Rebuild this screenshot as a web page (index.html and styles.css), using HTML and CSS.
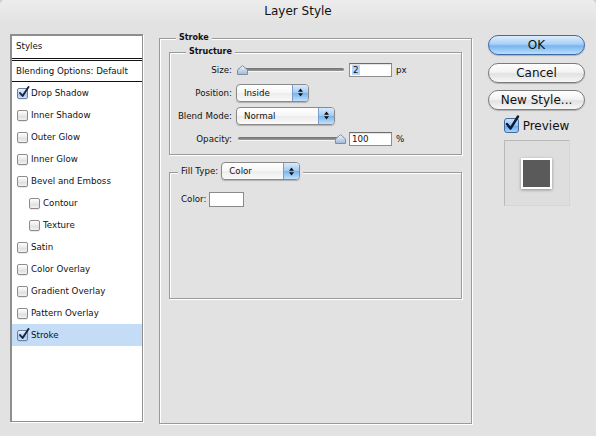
FILE: index.html
```html
<!DOCTYPE html>
<html>
<head>
<meta charset="utf-8">
<title>Layer Style</title>
<link rel="stylesheet" href="styles.css">
</head>
<body>
<div class="window">
  <div class="titlebar">Layer Style</div>
  <div class="content">
    <div class="list">
      <div class="row head">Styles</div>
      <div class="row blend">Blending Options: Default</div>
      <div class="row item"><span class="cb checked"><svg class="check" width="12" height="13" viewBox="0 0 12 13"><path d="M2 7 L4.6 10 L10.5 1" fill="none" stroke="#16223f" stroke-width="1.9" stroke-linecap="round" stroke-linejoin="round"/></svg></span>Drop Shadow</div>
      <div class="row item"><span class="cb"></span>Inner Shadow</div>
      <div class="row item"><span class="cb"></span>Outer Glow</div>
      <div class="row item"><span class="cb"></span>Inner Glow</div>
      <div class="row item"><span class="cb"></span>Bevel and Emboss</div>
      <div class="row item sub"><span class="cb"></span>Contour</div>
      <div class="row item sub"><span class="cb"></span>Texture</div>
      <div class="row item"><span class="cb"></span>Satin</div>
      <div class="row item"><span class="cb"></span>Color Overlay</div>
      <div class="row item"><span class="cb"></span>Gradient Overlay</div>
      <div class="row item"><span class="cb"></span>Pattern Overlay</div>
      <div class="row item selected"><span class="cb checked"><svg class="check" width="12" height="13" viewBox="0 0 12 13"><path d="M2 7 L4.6 10 L10.5 1" fill="none" stroke="#16223f" stroke-width="1.9" stroke-linecap="round" stroke-linejoin="round"/></svg></span>Stroke</div>
    </div>

    <div class="panel">
      <div class="legend bold">Stroke</div>
      <div class="group structure">
        <div class="legend bold">Structure</div>
        <div class="frow">
          <span class="lbl">Size:</span>
          <div class="slider">
            <div class="track"></div>
            <svg class="thumb thumb-min" width="11" height="10" viewBox="0 0 11 10"><defs><linearGradient id="tg1" x1="0" y1="0" x2="0" y2="1"><stop offset="0" stop-color="#f4f7fb"/><stop offset="0.5" stop-color="#c9d6e8"/><stop offset="1" stop-color="#9fb8da"/></linearGradient></defs><path d="M0.5 9.5 L0.5 5 L5.5 0.6 L10.5 5 L10.5 9.5 Z" fill="url(#tg1)" stroke="#7f8da3" stroke-width="1" stroke-linejoin="round"/></svg>
          </div>
          <span class="field"><span class="selection">2</span></span>
          <span class="unit">px</span>
        </div>
        <div class="frow">
          <span class="lbl">Position:</span>
          <div class="popup w-pos"><span class="ptext">Inside</span><span class="parrows"><svg width="5" height="9" viewBox="0 0 5 9"><path d="M0 3.8 L2.5 0.5 L5 3.8 Z M0 5.2 L2.5 8.5 L5 5.2 Z" fill="#111"/></svg></span></div>
        </div>
        <div class="frow">
          <span class="lbl">Blend Mode:</span>
          <div class="popup w-blend"><span class="ptext">Normal</span><span class="parrows"><svg width="5" height="9" viewBox="0 0 5 9"><path d="M0 3.8 L2.5 0.5 L5 3.8 Z M0 5.2 L2.5 8.5 L5 5.2 Z" fill="#111"/></svg></span></div>
        </div>
        <div class="frow">
          <span class="lbl">Opacity:</span>
          <div class="slider">
            <div class="track"></div>
            <svg class="thumb thumb-max" width="11" height="10" viewBox="0 0 11 10"><defs><linearGradient id="tg2" x1="0" y1="0" x2="0" y2="1"><stop offset="0" stop-color="#f4f7fb"/><stop offset="0.5" stop-color="#c9d6e8"/><stop offset="1" stop-color="#9fb8da"/></linearGradient></defs><path d="M0.5 9.5 L0.5 5 L5.5 0.6 L10.5 5 L10.5 9.5 Z" fill="url(#tg2)" stroke="#7f8da3" stroke-width="1" stroke-linejoin="round"/></svg>
          </div>
          <span class="field">100</span>
          <span class="unit">%</span>
        </div>
      </div>

      <div class="group fill">
        <div class="legend fill-legend">
          <span>Fill Type:</span>
          <div class="popup w-fill"><span class="ptext">Color</span><span class="parrows"><svg width="5" height="9" viewBox="0 0 5 9"><path d="M0 3.8 L2.5 0.5 L5 3.8 Z M0 5.2 L2.5 8.5 L5 5.2 Z" fill="#111"/></svg></span></div>
        </div>
        <div class="color-row"><span class="color-lbl">Color:</span><span class="swatch"></span></div>
      </div>
    </div>

    <div class="side">
      <div class="btn default">OK</div>
      <div class="btn">Cancel</div>
      <div class="btn">New Style...</div>
      <div class="preview-check"><span class="cb-lg"><svg width="16" height="17" viewBox="0 0 16 17"><path d="M3 9 L6.5 13.5 L14 1.5" fill="none" stroke="#0e1a33" stroke-width="2.4" stroke-linecap="round" stroke-linejoin="round"/></svg></span>Preview</div>
      <div class="preview-box"><div class="preview-swatch"></div></div>
    </div>
  </div>
</div>
</body>
</html>
```

FILE: styles.css
```css
* { box-sizing: border-box; }
html, body { margin: 0; padding: 0; }
body {
  width: 596px;
  height: 436px;
  overflow: hidden;
  background: #cfcfcf;
  font-family: "DejaVu Sans", "Noto Sans", sans-serif;
  font-size: 8.7px;
  color: #111;
}
.window {
  width: 596px;
  height: 436px;
  background: #e2e2e2;
  border-radius: 5px 5px 0 0;
}
.titlebar {
  height: 22px;
  line-height: 22px;
  text-align: center;
  font-size: 12px;
  color: #111;
  background: linear-gradient(#ededed, #e3e3e3);
  border-radius: 5px 5px 0 0;
}
.content {
  display: flex;
  align-items: flex-start;
  padding: 12px 0 0 10px;
}

/* left list */
.list {
  width: 133px;
  height: 388px;
  background: #fff;
  border: 1px solid #8e8e8e;
  border-top-width: 2px;
  border-left-width: 2px;
  box-shadow: 1px 1px 0 #fff;
}
.row {
  display: flex;
  align-items: center;
  white-space: nowrap;
}
.head {
  height: 25px;
  padding-left: 4px;
  padding-bottom: 2px;
  border-bottom: 3px double #111;
}
.blend {
  height: 21px;
  padding-left: 4px;
  border-bottom: 1px solid #111;
}
.item {
  height: 22px;
  padding-left: 5px;
}
.item.sub { padding-left: 17px; }
.item.selected { background: #c5dcf7; }
.cb {
  position: relative;
  width: 11px;
  height: 11px;
  margin-right: 3px;
  flex: none;
  border: 1px solid #8c8c8c;
  border-radius: 2px;
  background: linear-gradient(#fefefe, #e9e9e9 50%, #dcdcdc 51%, #f2f2f2);
  box-shadow: 0 1px 0 rgba(0,0,0,.08);
}
.cb.checked {
  border-color: #6b7f9e;
  background: linear-gradient(#e9f2fc, #b9d2f0 50%, #9dbfe8 51%, #cfe3f8);
}
.check {
  position: absolute;
  left: 0;
  top: -3px;
}

/* middle panel */
.panel {
  width: 313px;
  height: 386px;
  margin: 4px 0 0 16px;
  padding: 0 9px;
  border: 1px solid #9a9a9a;
  box-shadow: 1px 1px 0 #fff, inset 1px 1px 0 #fff;
}
.group {
  border: 1px solid #9a9a9a;
  box-shadow: 1px 1px 0 #fff, inset 1px 1px 0 #fff;
}
.legend {
  width: fit-content;
  background: #e2e2e2;
  padding: 0 3px;
  line-height: 12px;
  height: 12px;
  margin: -7px 0 0 7px;
}
.bold { font-weight: bold; font-size: 8px; }
.structure {
  margin-top: 8px;
  height: 103px;
}
.structure .legend { margin-left: 16px; }
.frow {
  display: flex;
  align-items: center;
  height: 23px;
}
.lbl {
  width: 62px;
  text-align: right;
  margin-right: 4px;
  white-space: nowrap;
}
.slider {
  position: relative;
  width: 110px;
  height: 12px;
  display: flex;
  align-items: center;
}
.track {
  width: 100%;
  height: 3px;
  margin: 0 2px;
  border-radius: 2px;
  background: linear-gradient(#6f6f6f, #9b9b9b);
  box-shadow: 0 1px 0 #f6f6f6;
}
.thumb { position: absolute; top: 1px; }
.thumb-min { left: 1px; }
.thumb-max { right: 0; }
.field {
  width: 43px;
  height: 14px;
  margin-left: 3px;
  padding-left: 2px;
  line-height: 12px;
  background: #fff;
  border: 1px solid #8e8e8e;
  border-top-color: #6c6c6c;
  box-shadow: inset 0 1px 1px rgba(0,0,0,.12);
}
.selection { background: #b5d5ff; padding: 0 1px; }
.unit { margin-left: 4px; }

.popup {
  display: flex;
  height: 18px;
  border: 1px solid #8a8a8a;
  border-radius: 4px;
  overflow: hidden;
  background: linear-gradient(#ffffff, #f6f6f6 50%, #ececec 51%, #fafafa);
  box-shadow: 0 1px 1px rgba(0,0,0,.22);
}
.w-pos { width: 73px; }
.w-blend { width: 99px; }
.w-fill { width: 79px; margin-left: 3px; }
.ptext {
  flex: 1;
  padding-left: 7px;
  line-height: 16px;
}
.parrows {
  width: 16px;
  flex: none;
  display: flex;
  align-items: center;
  justify-content: center;
  border-left: 1px solid #7b9cc9;
  background: linear-gradient(#d9ebfc, #9fcaf3 50%, #77b2ed 51%, #bfe2fd);
}

.fill {
  margin-top: 17px;
  height: 127px;
}
.fill-legend {
  display: flex;
  align-items: center;
  height: 18px;
  line-height: 18px;
  margin: -11px 0 0 8px;
}
.color-row {
  display: flex;
  align-items: flex-start;
  margin-top: 12px;
  padding-left: 11px;
}
.color-lbl {
  line-height: 12px;
  margin-top: 1px;
}
.swatch {
  width: 35px;
  height: 15px;
  margin-left: 3px;
  background: #fff;
  border: 1px solid #8a8a8a;
}

/* right column */
.side {
  width: 97px;
  margin: 1px 0 0 16px;
  display: flex;
  flex-direction: column;
}
.btn {
  height: 20px;
  line-height: 18px;
  text-align: center;
  font-size: 12px;
  color: #111;
  border: 1px solid #7b7b7b;
  border-radius: 10px;
  background: linear-gradient(#fefefe, #f3f3f3 45%, #e2e2e2 55%, #f7f7f7);
  box-shadow: 0 1px 1px rgba(0,0,0,.22);
}
.btn + .btn { margin-top: 7px; }
.btn.default {
  margin-bottom: 1px;
  border-color: #3f6aa5;
  background: linear-gradient(#dcedfd, #a9d0f6 45%, #78b4ee 55%, #b9e1ff);
}
.preview-check {
  display: flex;
  align-items: center;
  justify-content: center;
  margin-top: 8px;
  height: 15px;
  font-size: 12px;
}
.cb-lg {
  position: relative;
  width: 15px;
  height: 15px;
  margin-right: 4px;
  border: 1px solid #43689e;
  border-radius: 3px;
  background: linear-gradient(#cfe5fb, #8ec1f1 50%, #64a6ea 51%, #a6d6fc);
}
.cb-lg svg { position: absolute; left: -1px; top: -4px; }
.preview-box {
  width: 66px;
  height: 66px;
  margin: 7px auto 0;
  display: flex;
  align-items: center;
  justify-content: center;
  background: #dedede;
  border: 1px solid #b8b8b8;
  border-right-color: #d6d6d6;
  border-bottom-color: #d6d6d6;
}
.preview-swatch {
  width: 31px;
  height: 31px;
  background: #5a5a5a;
  border: 2px solid #fff;
  box-shadow: 0 1px 3px rgba(0,0,0,.35);
}
```
